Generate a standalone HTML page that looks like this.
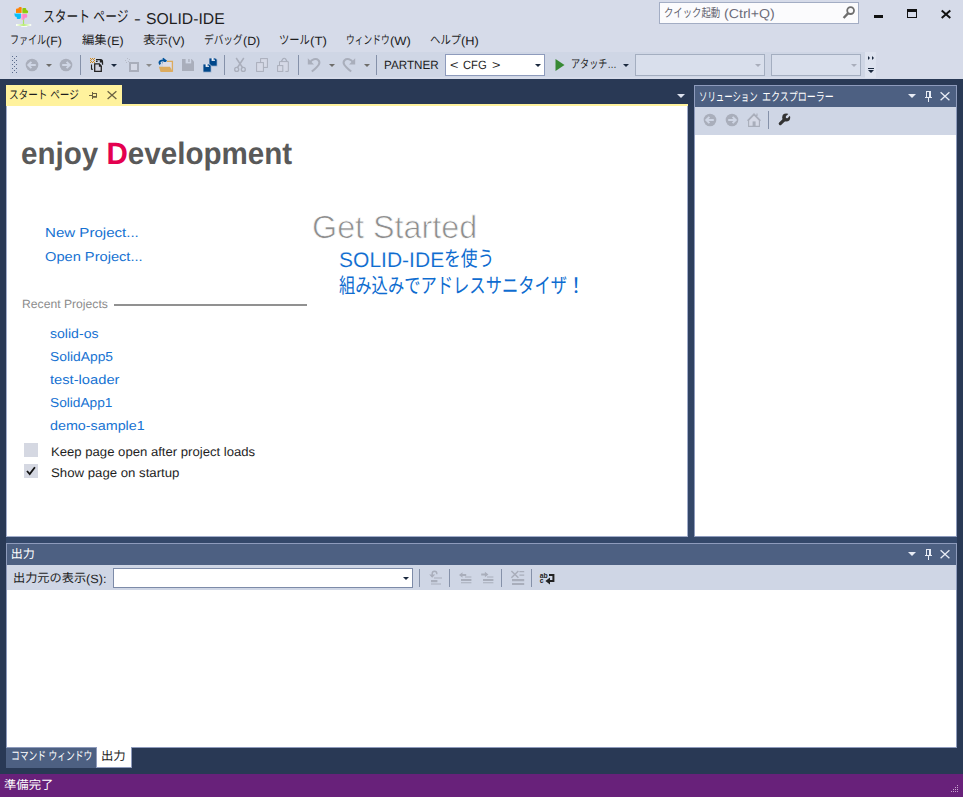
<!DOCTYPE html>
<html lang="ja"><head><meta charset="utf-8"><title>スタート ページ - SOLID-IDE</title>
<style>
html,body{margin:0;padding:0}
body{width:963px;height:797px;position:relative;overflow:hidden;background:#293955;font-family:"Liberation Sans","Noto Sans CJK JP",sans-serif;font-size:12px;color:#1E1E1E}
.b{position:absolute}
.jp{position:absolute;display:block;white-space:pre;transform-origin:0 0;font-family:"Liberation Sans","Noto Sans CJK JP",sans-serif;text-rendering:geometricPrecision}
.t{position:absolute;display:block;white-space:pre;line-height:40px;height:40px;transform-origin:0 0;text-rendering:geometricPrecision}
#ic{position:absolute;left:0;top:0}
</style></head>
<body>
<div class="b" style="left:0px;top:0px;width:963px;height:79px;background:#D6DBE9;"></div>
<div class="b" style="left:10px;top:52px;width:855px;height:25px;background:#CFD6E5;"></div>
<div class="b" style="left:865px;top:52px;width:11px;height:26px;background:#DEE3EF;"></div>
<div class="b" style="left:659px;top:2px;width:200px;height:22px;background:#FBFBFD;border:1px solid #A3ADC4;box-sizing:border-box"></div>
<div class="b" style="left:445px;top:54px;width:100px;height:22px;background:#FFFFFF;border:1px solid #8E9BBC;box-sizing:border-box"></div>
<div class="b" style="left:635px;top:54px;width:130px;height:22px;background:#D9DFEC;border:1px solid #A4AEC0;box-sizing:border-box"></div>
<div class="b" style="left:771px;top:54px;width:90px;height:22px;background:#D9DFEC;border:1px solid #A4AEC0;box-sizing:border-box"></div>
<div class="b" style="left:0px;top:79px;width:963px;height:695px;background:#293955;"></div>
<div class="b" style="left:688px;top:85px;width:6px;height:452px;background:linear-gradient(#293955,#34486A);"></div>
<div class="b" style="left:6px;top:537px;width:951px;height:6px;background:#34486A;"></div>
<div class="b" style="left:6px;top:85px;width:116px;height:20px;background:#FFF29D;"></div>
<div class="b" style="left:6px;top:104px;width:682px;height:2px;background:#FFF29D;"></div>
<div class="b" style="left:6px;top:106px;width:682px;height:431px;background:#FFFFFF;border:1px solid #A3AECB;border-top:0;box-sizing:border-box"></div>
<div class="b" style="left:694px;top:85px;width:263px;height:452px;background:#FFFFFF;border:1px solid #8E9BBC;box-sizing:border-box"></div>
<div class="b" style="left:695px;top:86px;width:261px;height:21px;background:#4D6082;"></div>
<div class="b" style="left:695px;top:107px;width:261px;height:28px;background:#CFD6E5;"></div>
<div class="b" style="left:6px;top:543px;width:951px;height:205px;background:#FFFFFF;border:1px solid #8E9BBC;box-sizing:border-box"></div>
<div class="b" style="left:7px;top:544px;width:949px;height:21px;background:#4D6082;"></div>
<div class="b" style="left:7px;top:565px;width:949px;height:25px;background:#CFD6E5;"></div>
<div class="b" style="left:113px;top:568px;width:300px;height:20px;background:#FFFFFF;border:1px solid #7D8BA8;box-sizing:border-box"></div>
<div class="b" style="left:6px;top:748px;width:90px;height:20px;background:#4D6082;"></div>
<div class="b" style="left:96px;top:747px;width:36px;height:21px;background:#FFFFFF;border:1px solid #8E9BBC;border-top:0;box-sizing:border-box"></div>
<div class="b" style="left:0px;top:774px;width:963px;height:23px;background:#68217A;"></div>
<div class="b" style="left:114px;top:304px;width:193px;height:2px;background:#919191;"></div>
<div class="b" style="left:24px;top:443px;width:14px;height:14px;background:#D5D8E2;"></div>
<div class="b" style="left:24px;top:464px;width:14px;height:14px;background:#D5D8E2;"></div>
<span class="jp" style="left:43.32px;top:8.2px;height:20px;line-height:20px;font-size:15.6px;color:#1E1E1E;transform:scaleX(0.755);">スタート ページ</span>
<span class="t" style="left:133.99px;top:0px;font-size:15.6px;color:#1E1E1E;transform:scaleX(1.3128);">-</span>
<span class="t" style="left:145.99px;top:0px;font-size:15.6px;color:#1E1E1E;transform:scaleX(1.0087);">SOLID-IDE</span>
<span class="jp" style="left:10.21px;top:31.5px;height:17px;line-height:17px;font-size:12px;color:#1E1E1E;transform:scaleX(0.7525);">ファイル</span><span class="t" style="left:46.33px;top:21px;font-size:12px;color:#1E1E1E;transform:scaleX(1.0403);">(F)</span>
<span class="jp" style="left:81.88px;top:31.5px;height:17px;line-height:17px;font-size:12px;color:#1E1E1E;transform:scaleX(1.03);">編集</span><span class="t" style="left:106.65px;top:21px;font-size:12px;color:#1E1E1E;transform:scaleX(1.0324);">(E)</span>
<span class="jp" style="left:142.95px;top:31.5px;height:17px;line-height:17px;font-size:12px;color:#1E1E1E;transform:scaleX(1.04);">表示</span><span class="t" style="left:167.93px;top:21px;font-size:12px;color:#1E1E1E;transform:scaleX(1.0407);">(V)</span>
<span class="jp" style="left:204.32px;top:31.5px;height:17px;line-height:17px;font-size:12px;color:#1E1E1E;transform:scaleX(0.807);">デバッグ</span><span class="t" style="left:243.06px;top:21px;font-size:12px;color:#1E1E1E;transform:scaleX(1.0330);">(D)</span>
<span class="jp" style="left:279.47px;top:31.5px;height:17px;line-height:17px;font-size:12px;color:#1E1E1E;transform:scaleX(0.855);">ツール</span><span class="t" style="left:310.25px;top:21px;font-size:12px;color:#1E1E1E;transform:scaleX(1.1075);">(T)</span>
<span class="jp" style="left:346.29px;top:31.5px;height:17px;line-height:17px;font-size:12px;color:#1E1E1E;transform:scaleX(0.727);">ウィンドウ</span><span class="t" style="left:389.89px;top:21px;font-size:12px;color:#1E1E1E;transform:scaleX(1.0826);">(W)</span>
<span class="jp" style="left:430.09px;top:31.5px;height:17px;line-height:17px;font-size:12px;color:#1E1E1E;transform:scaleX(0.866);">ヘルプ</span><span class="t" style="left:461.28px;top:21px;font-size:12px;color:#1E1E1E;transform:scaleX(1.0692);">(H)</span>
<span class="jp" style="left:663.56px;top:4.5px;height:17px;line-height:17px;font-size:12px;color:#62626E;transform:scaleX(0.78);">クイック起動</span>
<span class="t" style="left:723.92px;top:-6px;font-size:13px;color:#6C6C7A;transform:scaleX(1.0897);">(Ctrl+Q)</span>
<span class="t" style="left:384.04px;top:45px;font-size:12px;color:#1E1E1E;transform:scaleX(0.9731);">PARTNER</span>
<span class="t" style="left:449.59px;top:45px;font-size:12px;color:#1E1E1E;transform:scaleX(1.2007);">&lt;</span>
<span class="t" style="left:462.83px;top:45px;font-size:12px;color:#1E1E1E;transform:scaleX(0.9360);">CFG</span>
<span class="t" style="left:491.69px;top:45px;font-size:12px;color:#1E1E1E;transform:scaleX(1.2007);">&gt;</span>
<span class="jp" style="left:571.31px;top:55.5px;height:17px;line-height:17px;font-size:12px;color:#1E1E1E;transform:scaleX(0.76);">アタッチ…</span>
<span class="jp" style="left:9.48px;top:87px;height:17px;line-height:17px;font-size:12px;color:#1E1E1E;transform:scaleX(0.802);">スタート ページ</span>
<span class="jp" style="left:698.61px;top:88.5px;height:17px;line-height:17px;font-size:12px;color:#FFFFFF;transform:scaleX(0.70);">ソリューション</span>
<span class="jp" style="left:761.93px;top:88.5px;height:17px;line-height:17px;font-size:12px;color:#FFFFFF;transform:scaleX(0.749);">エクスプローラー</span>
<span class="jp" style="left:10.74px;top:545.6px;height:17px;line-height:17px;font-size:12px;color:#FFFFFF;transform:scaleX(1.0);">出力</span>
<span class="jp" style="left:13.37px;top:569.5px;height:17px;line-height:17px;font-size:12px;color:#1E1E1E;transform:scaleX(1.015);">出力元の表示</span><span class="t" style="left:86.44px;top:559px;font-size:12px;color:#1E1E1E;transform:scaleX(1.0561);">(S):</span>
<span class="jp" style="left:10.59px;top:748.3px;height:17px;line-height:17px;font-size:12px;color:#FFFFFF;transform:scaleX(0.731);">コマンド ウィンドウ</span>
<span class="jp" style="left:101.2px;top:748px;height:17px;line-height:17px;font-size:12px;color:#1E1E1E;transform:scaleX(1.03);">出力</span>
<span class="jp" style="left:3.61px;top:777px;height:17px;line-height:17px;font-size:12px;color:#FFFFFF;transform:scaleX(1.03);">準備完了</span>
<span class="jp" style="left:21.3px;top:134.6px;height:37.43px;line-height:37.43px;font-size:31px;font-weight:bold;color:#595959;transform:scaleX(0.954);">enjoy <span style="color:#E4004F">D</span>evelopment</span>
<span class="t" style="left:44.76px;top:213px;font-size:13px;color:#1672D2;transform:scaleX(1.1594);">New Project...</span>
<span class="t" style="left:45.01px;top:237px;font-size:13px;color:#1672D2;transform:scaleX(1.1259);">Open Project...</span>
<span class="t" style="left:21.6px;top:284px;font-size:12px;color:#8C8C8C;transform:scaleX(1.0134);">Recent Projects</span>
<span class="t" style="left:49.81px;top:314px;font-size:13px;color:#1672D2;transform:scaleX(1.0827);">solid-os</span>
<span class="t" style="left:49.57px;top:337px;font-size:13px;color:#1672D2;transform:scaleX(1.0631);">SolidApp5</span>
<span class="t" style="left:49.98px;top:360px;font-size:13px;color:#1672D2;transform:scaleX(1.1310);">test-loader</span>
<span class="t" style="left:49.58px;top:383px;font-size:13px;color:#1672D2;transform:scaleX(1.0544);">SolidApp1</span>
<span class="t" style="left:49.6px;top:406px;font-size:13px;color:#1672D2;transform:scaleX(1.1014);">demo-sample1</span>
<span class="t" style="left:51.22px;top:432px;font-size:12.5px;color:#1E1E1E;transform:scaleX(1.0491);">Keep page open after project loads</span>
<span class="t" style="left:50.9px;top:453px;font-size:12.5px;color:#1E1E1E;transform:scaleX(1.0563);">Show page on startup</span>
<span class="t" style="left:312.38px;top:207px;font-size:32px;color:#8E8E8E;transform:scaleX(1.0096);-webkit-text-stroke:0.7px #fff;">Get Started</span>
<span class="t" style="left:338.75px;top:241px;font-size:21px;color:#0E6CD0;transform:scaleX(1.0013);-webkit-text-stroke:0.12px #fff;">SOLID-IDE</span>
<span class="jp" style="left:443.52px;top:246.5px;height:26px;line-height:26px;font-size:21px;color:#0E6CD0;transform:scaleX(0.80);">を使う</span>
<span class="jp" style="left:339.18px;top:274px;height:26px;line-height:26px;font-size:21px;color:#0E6CD0;transform:scaleX(0.776);">組み込みでアドレスサニタイザ</span>
<span class="jp" style="left:565.4px;top:274px;height:26px;line-height:26px;font-size:21px;color:#0E6CD0;">！</span>
<svg id="ic" width="963" height="797" viewBox="0 0 963 797">
<defs><linearGradient id="gb" x1="0" x2="1" y1="0" y2="0"><stop offset="0" stop-color="#fff"/><stop offset=".5" stop-color="#B9EC78"/><stop offset="1" stop-color="#fff"/></linearGradient></defs>
<path fill="#FF8205" d="M16 13V9.6q0-1.2 1.2-1.2h1.1q.2-1.5 1.6-1.5h.6q1.3 0 1.3 1.4V13z"/>
<path fill="#8CC808" d="M22.2 13.6V9.3q0-1.3 1.3-1.3h1.6q1.2 0 1.2 1.3v.6q1.8 0 1.8 1.6v.6q0 1.5-1.6 1.5z"/>
<path fill="#08C0FA" d="M20.9 13.3v4.3q0 1.4-1.4 1.4h-1.7q-1.1 0-1.1-1.3v-.6q-2.2-.2-2.2-2.3v-1.5z"/>
<path fill="#FF86CC" d="M21.3 14.1h4.6q1.3 0 1.3 1.3v1.2q0 1.2-1.3 1.2h-1.2v.6q0 1.3-1.3 1.3h-.8q-1.3 0-1.3-1.3z"/>
<rect x="22.9" y="19.6" width="1.2" height="5" fill="#ABE268"/><path stroke="#fff" stroke-width=".5" opacity=".7" d="M21.95 8.5v11M15 13.35h13"/>
<rect x="16" y="24" width="15.2" height="2" fill="url(#gb)"/><rect x="21.3" y="26" width="6" height="1" fill="#fff" opacity=".8"/>
<rect x="874" y="15" width="9" height="3" fill="#111"/>
<path fill="#111" d="M907 9h10v9h-10zM908 12v5h8v-5z" fill-rule="evenodd"/>
<path stroke="#111" stroke-width="2" fill="none" d="M941.7 10.6l8.6 7.4M950.3 10.6l-8.6 7.4"/>
<circle cx="850.6" cy="10.6" r="3.4" fill="none" stroke="#6E6E6E" stroke-width="1.8"/><path d="M848.2 13.2l-4.6 4.8" stroke="#6E6E6E" stroke-width="2.4" fill="none"/>
<path fill="#5A6B8C" d="M12 56h1v1h-1zM16 56h1v1h-1zM14 58h1v1h-1zM12 60h1v1h-1zM16 60h1v1h-1zM14 62h1v1h-1zM12 64h1v1h-1zM16 64h1v1h-1zM14 66h1v1h-1zM12 68h1v1h-1zM16 68h1v1h-1zM14 70h1v1h-1zM12 72h1v1h-1zM16 72h1v1h-1z"/>
<circle cx="32" cy="65" r="6.3" fill="#A9AEBB"/>
<path fill="none" stroke="#CFD6E5" stroke-width="1.9" d="M28.4 65h7.4M31.4 61.8l-3.2 3.2l3.2 3.2"/>
<path fill="#6E6D6A" d="M46 64h6l-3 3z"/>
<circle cx="66" cy="65" r="6.3" fill="#A9AEBB"/>
<path fill="none" stroke="#CFD6E5" stroke-width="1.9" d="M69.6 65h-7.4M66.6 61.8l3.2 3.2l-3.2 3.2"/>
<rect x="80" y="55" width="1" height="20" fill="#8591A9"/>
<path fill="#D28A1E" d="M90 58h1v1h-1zM92 58h1v1h-1zM94 58h1v1h-1zM91 59h1v1h-1zM93 59h1v1h-1zM90 60h1v1h-1zM94 60h1v1h-1zM91 61h1v1h-1zM93 61h1v1h-1zM90 62h1v1h-1zM92 62h1v1h-1zM94 62h1v1h-1z"/>
<path fill="none" stroke="#222" stroke-width="1.3" d="M96 59.7h4.2q2.3 0 2.3 2.4v2.6M96 61.4h1.6"/><path fill="#222" d="M99.8 59.2h1.2l2 2v1.2h-3.2z"/>
<path fill="#D2D3E0" stroke="#222" stroke-width="1.3" d="M94.7 63.9h4.4l2.2 2.4v5h-6.6z"/><path fill="#222" d="M98.9 63.6h.5l2.4 2.6v.5h-2.9z"/>
<path fill="none" stroke="#222" stroke-width="1.1" d="M91.5 64.4v4.8h1.5"/>
<path fill="#1B293E" d="M111 64h6l-3 3z"/>
<path fill="#B7BBC7" d="M125 60h1v1h-1zM127 58h1v1h-1zM129 59h1v1h-1zM126 62h1v1h-1zM128 61h1v1h-1zM130 62h1v1h-1z"/>
<rect x="130" y="63" width="8" height="8" fill="#D5D9E6" stroke="#A9AEBB" stroke-width="2"/>
<path fill="#8A8A8A" d="M146 64h6l-3 3z"/>
<path fill="none" stroke="#00539C" stroke-width="1.9" d="M160.2 64.4c-1.8-2.6 0-4.4 4.6-3.9"/><path fill="none" stroke="#00539C" stroke-width="1.7" d="M162.8 58.3l3 2.5-3 2.5"/>
<path fill="#DCDCE8" d="M163 62h9v6h-9z"/><path fill="none" stroke="#DCAB5E" stroke-width="1.3" d="M167 61.4h5.4v10.4"/>
<path fill="#DCAB5E" d="M158.8 66.7h11.2l2.8 5.2h-12.2z"/>
<path fill="#A9AEBB" d="M182 59h9.6l2.4 2.4v9.6h-12z"/><rect x="185.6" y="59" width="5.6" height="4.4" fill="#CFD6E5"/><rect x="188.3" y="59" width="1.3" height="3" fill="#A9AEBB"/>
<path fill="#00478A" stroke="#CFD6E5" stroke-width=".8" d="M209 58h6.4l1.8 1.8v6.4h-8.2z"/>
<rect x="211.6" y="58" width="3.4" height="2.9" fill="#EEF0F7"/><rect x="213.7" y="58" width="1" height="2.1" fill="#00478A"/>
<path fill="#00478A" stroke="#CFD6E5" stroke-width=".8" d="M203 64h6.4l1.8 1.8v6.4h-8.2z"/>
<rect x="205.6" y="64" width="3.4" height="2.9" fill="#EEF0F7"/><rect x="207.7" y="64" width="1" height="2.1" fill="#00478A"/>
<rect x="224" y="55" width="1" height="20" fill="#8591A9"/>
<path fill="none" stroke="#A9AEBB" stroke-width="1.5" d="M236.2 58l6.6 10M243.8 58l-6.6 10"/><circle cx="236.7" cy="69.4" r="2" fill="none" stroke="#A9AEBB" stroke-width="1.3"/><circle cx="243.3" cy="69.4" r="2" fill="none" stroke="#A9AEBB" stroke-width="1.3"/>
<rect x="260.6" y="58.6" width="6.8" height="8.8" fill="#D5D9E6" stroke="#A9AEBB"/><rect x="256.6" y="62.6" width="6.8" height="8.8" fill="#D5D9E6" stroke="#A9AEBB"/>
<path fill="#D5D9E6" stroke="#A9AEBB" d="M285.4 71.4h2.9v-9.8h-8.8v3.6"/><path fill="none" stroke="#A9AEBB" stroke-width="1.2" d="M281.4 61.4l1.5-2.5a1.6 1.6 0 0 1 2.6 0l1.5 2.5"/><rect x="277.6" y="65.6" width="5.2" height="5.8" fill="#D5D9E6" stroke="#A9AEBB"/>
<rect x="298" y="55" width="1" height="20" fill="#8591A9"/>
<g><path fill="none" stroke="#A9AEBB" stroke-width="2" d="M310 62.6c1.4-3.6 6.2-4.6 8.4-2.4 2.6 2.8.4 5.6-6.6 11.4"/><path fill="#A9AEBB" d="M307.8 58.2v6.4h6.2z"/></g>
<path fill="#6E6D6A" d="M329 64h6l-3 3z"/>
<g transform="translate(698.2 0) scale(-1 1)"><path fill="none" stroke="#A9AEBB" stroke-width="2" d="M345.2 62.6c1.4-3.6 6.2-4.6 8.4-2.4 2.6 2.8.4 5.6-6.6 11.4"/><path fill="#A9AEBB" d="M343 58.2v6.4h6.2z"/></g>
<path fill="#6E6D6A" d="M364 64h6l-3 3z"/>
<rect x="376" y="55" width="1" height="20" fill="#8591A9"/>
<path fill="#1B293E" d="M535 64h6l-3 3z"/>
<path fill="#388A34" d="M555.5 59l9 6-9 6z"/>
<path fill="#1B293E" d="M623 64h6l-3 3z"/>
<path fill="#A9AEBB" d="M755 64h6l-3 3z"/>
<path fill="#A9AEBB" d="M851 64h6l-3 3z"/>
<path fill="#1B293E" d="M868 56l2 2-2 2zM872 56l2 2-2 2zM868 68h6v1h-6zM868 70h6l-3 3z"/>
<path fill="#6B6242" d="M89 95h3v1h-3zM92 92h1v7h-1zM93 93h4v1h-4zM96 93h1v4.6h-1zM93 96h4v1.7h-4z"/>
<path fill="none" stroke="#6B6242" stroke-width="1.3" d="M107.6 91.3l8.8 7.6M116.4 91.3l-8.8 7.6"/>
<path fill="#DDE2EE" d="M677 94h8l-4 4z"/>
<path fill="#E8ECF5" d="M908 94h8l-4 4z"/>
<path fill="#E8ECF5" d="M926 91h5v6h1v1h-3v4h-1v-4h-3v-1h1zM927 92v5h2v-5z" fill-rule="evenodd"/>
<path fill="none" stroke="#E8ECF5" stroke-width="1.3" d="M940.6 92.2l8.8 8M949.4 92.2l-8.8 8"/>
<path fill="#E8ECF5" d="M908 552h8l-4 4z"/>
<path fill="#E8ECF5" d="M926 549h5v6h1v1h-3v4h-1v-4h-3v-1h1zM927 550v5h2v-5z" fill-rule="evenodd"/>
<path fill="none" stroke="#E8ECF5" stroke-width="1.3" d="M940.6 550.2l8.8 8M949.4 550.2l-8.8 8"/>
<circle cx="710" cy="120" r="6.3" fill="#A9AEBB"/>
<path fill="none" stroke="#CFD6E5" stroke-width="1.9" d="M706.4 120h7.4M709.4 116.8l-3.2 3.2l3.2 3.2"/>
<circle cx="732" cy="120" r="6.3" fill="#A9AEBB"/>
<path fill="none" stroke="#CFD6E5" stroke-width="1.9" d="M735.6 120h-7.4M732.6 116.8l3.2 3.2l-3.2 3.2"/>
<path fill="#D5D9E6" stroke="#A9AEBB" stroke-width="1.1" d="M748.6 126.4v-6l5.4-5.6 5.4 5.6v6zM747.4 120.6l6.6-6.8 6.6 6.8M757 116v-2.6"/><rect x="752.6" y="121.4" width="3" height="5" fill="#A9AEBB"/>
<rect x="768" y="111" width="1" height="18" fill="#8591A9"/>
<circle cx="786.2" cy="117.6" r="4" fill="#333"/><path d="M785.2 118.8l-4.9 4.8" stroke="#333" stroke-width="3.2" stroke-linecap="round" fill="none"/><path d="M787 116.9l4 -3.8" stroke="#CFD6E5" stroke-width="2.4" fill="none"/><circle cx="787" cy="116.9" r="1.25" fill="#CFD6E5"/>
<path fill="#1B293E" d="M403 577h6l-3 3z"/>
<rect x="419" y="569" width="1" height="18" fill="#8591A9"/>
<rect x="449" y="569" width="1" height="18" fill="#8591A9"/>
<rect x="501" y="569" width="1" height="18" fill="#8591A9"/>
<rect x="531" y="569" width="1" height="18" fill="#8591A9"/>
<path fill="none" stroke="#A9AEBB" stroke-width="1.4" d="M432.2 577v-3.4a2.3 2.3 0 0 1 4.6 0v.6"/><path fill="#A9AEBB" d="M429.2 574.4h6l-3 3.4zM434 577.6h8v1h-8zM431 580h6.4v2.2H431zM431 583.6h10v1h-10z"/>
<path fill="#A9AEBB" d="M459 575l3.5-2.8v1.8h3.7v2h-3.7v1.8zM465 576.6h6.4v1H465zM461 579h10.4v2H461zM461 582.2h10.4v1H461z"/>
<path fill="#A9AEBB" d="M488.4 574.5l-3.5-2.8v1.8h-3.7v2h3.7v1.8zM487 576.6h6.4v1H487zM483 579h10.4v2H483zM483 582.2h10.4v1H483z"/>
<path fill="none" stroke="#A9AEBB" stroke-width="1.5" d="M511.4 571l7 6.8M518.4 571l-7 6.8"/><path fill="#A9AEBB" d="M519.4 571h4.8v1.2h-4.8zM519.4 574.6h4.8v1.2h-4.8zM512 579h12.2v2.2H512zM512 583h12.2v2H512z"/>
<path fill="#222" d="M549 574h5.4v8h-4.4v2.4l-4.6-3.4 4.6-3.4v2.4h2.4v-4H549z"/>
<text x="539.7" y="577.5" font-family="Liberation Sans, sans-serif" font-weight="bold" font-size="6.8" fill="#222">ab</text><text x="539.7" y="583.3" font-family="Liberation Sans, sans-serif" font-weight="bold" font-size="6.8" fill="#222">c</text>
<path fill="none" stroke="#111" stroke-width="1.8" d="M27 471l2.7 3 5.2-6.8"/>
<path fill="#C6A3CF" d="M957 785h1v1h-1zM955 787h1v1h-1zM957 787h1v1h-1zM953 789h1v1h-1zM955 789h1v1h-1zM957 789h1v1h-1zM951 791h1v1h-1zM953 791h1v1h-1zM955 791h1v1h-1zM957 791h1v1h-1z"/>
</svg>
</body></html>
